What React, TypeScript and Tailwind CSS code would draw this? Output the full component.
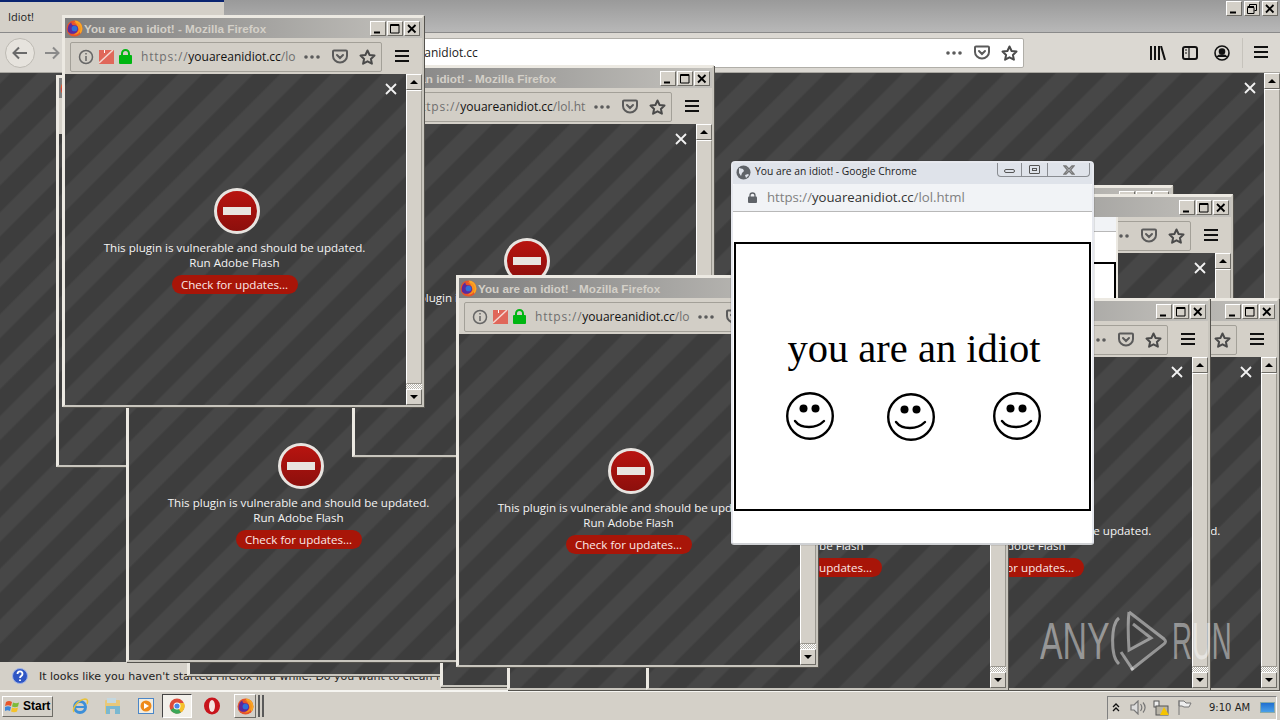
import React from "react";

const STRIPES =
  "bg-[repeating-linear-gradient(-45deg,#3d3d3d_0px,#3d3d3d_17px,#474747_19px,#474747_34px,#3d3d3d_36px)]";
const RAISED =
  "border border-t-[#ffffff] border-l-[#ffffff] border-r-[#6e6c66] border-b-[#6e6c66] bg-[#d4d0c8]";

function Pocket({ c = "#5b5b5b" }: { c?: string }) {
  return (
    <svg width="16" height="15" viewBox="0 0 16 15" fill="none" stroke={c} strokeWidth="2">
      <path d="M2 1.500h12a1 1 0 0 1 1 1V7a7 6.500 0 0 1-14 0V2.500a1 1 0 0 1 1-1z" />
      <path d="M5 6l3 3 3-3" strokeLinecap="round" />
    </svg>
  );
}
function Star() {
  return (
    <svg width="17" height="16" viewBox="0 0 17 16" fill="none" stroke="#4a4a4a" strokeWidth="2" strokeLinejoin="round">
      <path d="M8.500 1.500l2.100 4.500 4.900.6-3.600 3.300 1 4.800-4.400-2.400-4.400 2.400 1-4.800-3.600-3.300 4.900-.6z" />
    </svg>
  );
}
function Dots() {
  return (
    <svg width="18" height="4" viewBox="0 0 18 4" fill="#5b5b5b">
      <circle cx="3" cy="2" r="1.800" />
      <circle cx="9" cy="2" r="1.800" />
      <circle cx="15" cy="2" r="1.800" />
    </svg>
  );
}
function Burger() {
  return (
    <svg width="14" height="13" viewBox="0 0 14 13" fill="#111">
      <rect y="0" width="14" height="2" />
      <rect y="5" width="14" height="2" />
      <rect y="10" width="14" height="2" />
    </svg>
  );
}
function FirefoxLogo({ s = 17 }: { s?: number }) {
  return (
    <svg className="shrink-0" width={s} height={s} viewBox="0 0 16 16">
      <circle cx="8" cy="8" r="7.500" fill="#e8542a" />
      <path d="M8 .5a7.500 7.500 0 0 1 7.500 7.500c0 2-1 4-2 5-1-5-3-8-5.500-12.500z" fill="#f9a825" />
      <path d="M2 11c-1-3 0-7 3-9 0 2 1 3 3 3 3 0 4 3 3 5s-3 3-5 3-3-1-4-2z" fill="#5b2a9d" />
      <circle cx="8" cy="8" r="2.700" fill="#2f6fd8" />
      <path d="M7 2.500c3 .5 5 3 5 5.500s-2 5-5 5.500c4 1 7-2 7-5.500s-3-6.500-7-5.500z" fill="#f7941d" />
    </svg>
  );
}

function WinBtn({ kind }: { kind: "min" | "max" | "close" | "restore" }) {
  return (
    <div className={`flex h-[15px] w-[16px] items-center justify-center ${RAISED}`}>
      <svg width="10" height="10" viewBox="0 0 10 10" fill="none" stroke="#000">
        {kind === "min" && <rect x="1" y="7.500" width="6" height="2" fill="#000" stroke="none" />}
        {kind === "max" && <path d="M.5.500h8.500v8.500h-8.500zM.5 1.500h8.500" />}
        {kind === "restore" && <path d="M2.500 2V.5h7v6h-2M.5 3.500h6.500v6h-6.500zM.5 2.500h6.500" />}
        {kind === "close" && <path d="M1 1l7.500 7.500M8.500 1L1 8.500" strokeWidth="1.800" />}
      </svg>
    </div>
  );
}

function Scrollbar({ dither = true }: { dither?: boolean }) {
  return (
    <div className="flex w-[16px] shrink-0 flex-col bg-[#d4d0c8]">
      <div className={`flex h-[16px] items-center justify-center ${RAISED}`}>
        <div className="h-0 w-0 border-x-[4px] border-b-[4px] border-x-transparent border-b-black" />
      </div>
      <div className="flex-1 border border-t-white border-l-white border-r-[#9a978f] border-b-[#9a978f] bg-[#d4d0c8]" />
      {dither && <div className="h-[5px] bg-[repeating-conic-gradient(#ffffff_0_25%,#b8b5ad_0_50%)] bg-[length:2px_2px]" />}
      <div className={`flex h-[16px] items-center justify-center ${RAISED}`}>
        <div className="h-0 w-0 border-x-[4px] border-t-[4px] border-x-transparent border-t-black" />
      </div>
    </div>
  );
}

function CloseX({ pos }: { pos: string }) {
  return (
    <svg className={`absolute ${pos}`} width="12" height="12" viewBox="0 0 12 12" stroke="#f2f2f2" strokeWidth="1.800">
      <path d="M1 1l10 10M11 1L1 11" />
    </svg>
  );
}

function Plugin() {
  return (
    <div className="flex flex-col items-center pr-[2px] pt-[114px] font-['Open_Sans',sans-serif] text-[11.600px] leading-[15px] text-[#f4f4f4]">
      <div className="ml-[4px] flex h-[46px] w-[46px] items-center justify-center rounded-full border-[3px] border-[#e8e4e0] bg-gradient-to-b from-[#b81410] to-[#8c0f0c]">
        <div className="h-[8px] w-[28px] bg-[#e8e4e0]" />
      </div>
      <div className="mt-[6px] whitespace-nowrap">This plugin is vulnerable and should be updated.</div>
      <div className="whitespace-nowrap">Run Adobe Flash</div>
      <div className="mt-[5px] flex h-[19px] w-[126px] items-center justify-center rounded-full bg-[#a81508] text-[#fbe9e7]">
        Check for updates...
      </div>
    </div>
  );
}

function Firefox({ pos, short = false }: { pos: string; short?: boolean }) {
  return (
    <div className={`absolute flex h-[392px] w-[362px] flex-col border-2 border-t-[3px] border-l-[3px] border-[#ece9e2] border-r-[#c8c5bd] border-b-[#c8c5bd] bg-[#d4d0c8] shadow-[1px_1px_0_#55534e] ${pos}`}>
      <div className="flex h-[20px] shrink-0 items-center bg-gradient-to-r from-[#7e7e7e] to-[#c4c2bd] pl-[1px] pr-[2px] pt-[1px]">
        <FirefoxLogo />
        <span className="ml-[1px] whitespace-nowrap font-['Liberation_Sans',sans-serif] text-[11.700px] font-bold text-[#d4d0c8]">
          You are an idiot! - Mozilla Firefox
        </span>
        <div className="ml-auto flex gap-[1px]">
          <WinBtn kind="min" />
          <WinBtn kind="max" />
          <WinBtn kind="close" />
        </div>
      </div>
      <div className="flex h-[36px] shrink-0 items-center pl-[5px] pt-[1px]">
        <div className="flex h-[30px] w-[312px] items-center rounded-[2px] border border-[#a3a098] bg-[#d2cec6]">
          {short ? (
            <div className="w-[52px] shrink-0" />
          ) : (
            <div className="flex w-[70px] shrink-0 items-center gap-[5px] pl-[7px]">
              <svg width="16" height="16" viewBox="0 0 16 16" fill="none" stroke="#666" strokeWidth="1.500">
                <circle cx="8" cy="8" r="6.500" />
                <path d="M8 7v5M8 4v1.500" />
              </svg>
              <svg width="15" height="14" viewBox="0 0 15 14">
                <rect width="15" height="14" y="0" fill="#e0675a" />
                <path d="M0 13L14 0" stroke="#f4d8d2" strokeWidth="1.500" />
                <rect x="5" y="0" width="1" height="3" fill="#fff" />
              </svg>
              <svg width="13" height="15" viewBox="0 0 13 15" fill="#00b612">
                <path d="M3 7V4.500a3.500 3.500 0 0 1 7 0V7" fill="none" stroke="#00b612" strokeWidth="2" />
                <rect y="6" width="13" height="9" rx="1" />
              </svg>
            </div>
          )}
          <div className={`h-[20px] shrink-0 overflow-hidden whitespace-nowrap font-['Open_Sans',sans-serif] text-[12px] leading-[20px] text-[#6f6f6f] ${short ? "w-[173px]" : "w-[155px]"}`}>
            <span className="tracking-[0.8px]">https://</span>
            <span className="text-[#111]">youareanidiot.cc</span>/lol.html
          </div>
          <div className="ml-[7px] flex items-center">
            <Dots />
          </div>
          <div className="ml-[11px] flex">
            <Pocket />
          </div>
          <div className="ml-[11px] flex">
            <Star />
          </div>
        </div>
        <div className="ml-[13px] flex">
          <Burger />
        </div>
      </div>
      <div className="flex min-h-0 flex-1">
        <div className={`relative min-w-0 flex-1 overflow-hidden ${STRIPES}`}>
          <CloseX pos="left-[320px] top-[9px]" />
          <Plugin />
        </div>
        <Scrollbar />
      </div>
    </div>
  );
}

function Smiley({ cls }: { cls: string }) {
  return (
    <svg className={cls} width="48" height="48" viewBox="0 0 48 48" fill="none" stroke="#000" strokeWidth="2.400">
      <circle cx="24" cy="24" r="22.800" />
      <circle cx="17.500" cy="16.500" r="4" fill="#000" stroke="none" />
      <circle cx="29.500" cy="16.500" r="4" fill="#000" stroke="none" />
      <path d="M9 29c3 4 8 6 14 6s11-2 15-6" strokeWidth="2.400" strokeLinecap="round" />
    </svg>
  );
}

function Chrome() {
  return (
    <div className="absolute left-[731px] top-[161px] flex h-[384px] w-[363px] flex-col rounded-t-[4px] rounded-b-[3px] border-2 border-[#e6e8ee] border-b-[#cfd1d4] bg-white shadow-[0_0_1px_#222]">
      <div className="flex h-[21px] shrink-0 items-center bg-[#dfe3ea] pl-[3px]">
        <svg className="mb-[2px]" width="15" height="15" viewBox="0 0 15 15">
          <circle cx="7.500" cy="7.500" r="7" fill="#5f6368" />
          <path d="M3 3l4 1 1 2-2 2-1 3-2-3zM9 10l3-1 1 1-3 3z" fill="#dfe3ea" />
        </svg>
        <span className="mb-[3px] ml-[4px] whitespace-nowrap font-['Open_Sans',sans-serif] text-[10.300px] text-[#222]">
          You are an idiot! - Google Chrome
        </span>
        <div className="ml-auto mr-[2px] flex h-[14px] self-start rounded-b-[4px] border border-t-0 border-[#8a8d92]">
          <div className="flex w-[24px] items-center justify-center border-r border-[#8a8d92]">
            <div className="mt-[3px] h-[4px] w-[11px] rounded-[2px] border border-[#555]" />
          </div>
          <div className="flex w-[26px] items-center justify-center border-r border-[#8a8d92]">
            <div className="flex h-[9px] w-[11px] items-center justify-center rounded-[1px] border border-[#555]">
              <div className="h-[3px] w-[5px] border border-[#555]" />
            </div>
          </div>
          <div className="flex w-[41px] items-center justify-center">
            <svg width="12" height="10" viewBox="0 0 12 10" fill="none" stroke="#777" strokeWidth="1.300">
              <path d="M1 1h2l3 3 3-3h2L7.500 5 11 9H9L6 6 3 9H1l3.500-4z" />
            </svg>
          </div>
        </div>
      </div>
      <div className="flex h-[28px] shrink-0 items-center rounded-t-[2px] border-b border-[#b8b8b8] bg-[#f1f3f6] pl-[15px]">
        <svg width="9" height="11" viewBox="0 0 9 11" fill="#5f6368">
          <path d="M2 5V3.500a2.500 2.500 0 0 1 5 0V5" fill="none" stroke="#5f6368" strokeWidth="1.300" />
          <rect y="4.500" width="9" height="6.500" rx="1" />
        </svg>
        <span className="ml-[10px] whitespace-nowrap font-['Open_Sans',sans-serif] text-[13.200px] text-[#808080]">
          https://<span className="text-[#333]">youareanidiot.cc</span>/lol.html
        </span>
      </div>
      <div className="h-[30px] shrink-0" />
      <div className="relative mx-[1px] h-[269px] shrink-0 border-2 border-black">
        <div className="pl-[3px] pt-[82px] text-center font-['Liberation_Serif',serif] text-[40.500px] leading-[46px] text-black">
          you are an idiot
        </div>
        <Smiley cls="absolute left-[50px] top-[148px]" />
        <Smiley cls="absolute left-[151px] top-[149px]" />
        <Smiley cls="absolute left-[257px] top-[148px]" />
      </div>
    </div>
  );
}

function TaskIcon({ children }: { children: React.ReactNode }) {
  return <div className="flex w-[33px] shrink-0 items-center justify-center">{children}</div>;
}

function Watermark() {
  return (
    <div className="absolute left-[1040px] top-[609px] flex h-[64px] items-center font-['Liberation_Sans',sans-serif] text-[52px] leading-[64px] text-white/45">
      <span className="w-[67px] origin-left scale-x-[0.65] whitespace-nowrap">ANY</span>
      <svg width="60" height="62" viewBox="0 0 60 62" fill="none" stroke="#ffffff" strokeOpacity="0.45" strokeWidth="3">
        <path d="M12 8C4 14 3 46 12 54" />
        <path d="M22 2l35 27c2 2 2 3 0 5L24 60M22 2c-1 8-1 22 0 38l22-12L26 14" />
        <path d="M14 42l12 18" />
      </svg>
      <span className="ml-[5px] w-[60px] origin-left scale-x-[0.53] whitespace-nowrap">RUN</span>
    </div>
  );
}

export default function App() {
  return (
    <div className="relative flex h-[720px] w-[1280px] flex-col overflow-hidden bg-[#d4d0c8] font-['Open_Sans',sans-serif]">
      {/* main browser title */}
      <div className="flex h-[33px] shrink-0 border-b border-[#8a8a8a] bg-gradient-to-b from-[#9a9a9a] to-[#b8b8b8]">
        <div className="flex w-[224px] shrink-0 items-center border-t-2 border-[#0a2470] bg-[#d4d0c8] pl-[8px] text-[11px] text-[#222]">
          Idiot!
        </div>
        <div className="ml-auto mr-[2px] mt-[1px] flex gap-[2px]">
          <WinBtn kind="min" />
          <WinBtn kind="restore" />
          <WinBtn kind="close" />
        </div>
      </div>
      {/* main toolbar */}
      <div className="flex h-[40px] shrink-0 items-center border-b border-[#a8a6a0] bg-[#dbd8d2] pl-[5px]">
        <div className="flex h-[30px] w-[30px] shrink-0 items-center justify-center rounded-full border border-[#bdbab3] bg-[#e6e3dd]">
          <svg width="16" height="14" viewBox="0 0 16 14" fill="none" stroke="#6a6a6a" strokeWidth="2">
            <path d="M15 7H2M7 1.500L1.500 7 7 12.500" />
          </svg>
        </div>
        <svg className="ml-[9px]" width="16" height="14" viewBox="0 0 16 14" fill="none" stroke="#8a8a8a" strokeWidth="2">
          <path d="M1 7h13M9 1.500L14.500 7 9 12.500" />
        </svg>
        <div className="ml-[10px] flex h-[30px] w-[954px] shrink-0 items-center rounded-[2px] border border-[#b0aea8] bg-white pl-[267px]">
          <span className="mt-[1px] whitespace-nowrap text-[12px] text-[#222]">
            <span className="tracking-[0.8px] text-[#6f6f6f]">https://</span>youareanidiot.cc
          </span>
          <div className="ml-auto flex">
            <Dots />
          </div>
          <div className="ml-[11px] flex">
            <Pocket />
          </div>
          <div className="ml-[11px] mr-[5px] flex">
            <Star />
          </div>
        </div>
        <svg className="ml-[126px]" width="16" height="14" viewBox="0 0 16 14" fill="none" stroke="#111" strokeWidth="2">
          <path d="M1 0v14M5 0v14M9 0v14M11 0l4 14" />
        </svg>
        <svg className="ml-[16px]" width="16" height="14" viewBox="0 0 16 14" fill="none" stroke="#111" strokeWidth="2">
          <rect x="1" y="1" width="14" height="12" rx="2" />
          <path d="M7 1v12M3 4h2M3 7h2" strokeWidth="1.200" />
        </svg>
        <svg className="ml-[16px]" width="16" height="16" viewBox="0 0 16 16" fill="none" stroke="#111" strokeWidth="1.600">
          <circle cx="8" cy="8" r="7" />
          <circle cx="8" cy="6.500" r="2.500" fill="#111" />
          <path d="M3 12c2-2.500 8-2.500 10 0" fill="#111" />
        </svg>
        <div className="ml-[12px] h-[30px] border-l border-[#c6c3bc]" />
        <div className="ml-[11px] flex">
          <Burger />
        </div>
      </div>
      {/* main page */}
      <div className={`relative flex min-h-0 flex-1 ${STRIPES}`}>
        <div className="flex-1" />
        <CloseX pos="left-[1244px] top-[9px]" />
        <Scrollbar />
      </div>
      {/* notification bar */}
      <div className="flex h-[30px] shrink-0 items-center border-b-2 border-[#f6f5f1] pl-[12px]">
        <svg width="16" height="16" viewBox="0 0 16 16">
          <circle cx="8" cy="8" r="7.500" fill="#2f56c4" stroke="#9fb2e6" />
          <path d="M5.500 6c0-3.500 5-3.500 5 0 0 2-2.500 2-2.500 4M8 11.500v1.500" stroke="#fff" strokeWidth="1.800" fill="none" />
        </svg>
        <span className="ml-[11px] mt-[2px] whitespace-nowrap font-['DejaVu_Sans',sans-serif] text-[11px] text-[#222]">
          It looks like you haven't started Firefox in a while. Do you want to clean it up for a fresh experience?
        </span>
      </div>
      {/* taskbar */}
      <div className="flex h-[28px] shrink-0 items-center bg-[#d4d0c8] pl-[2px]">
        <div className={`flex h-[21px] w-[51px] shrink-0 items-center gap-[2px] pl-[2px] ${RAISED}`}>
          <svg width="16" height="14" viewBox="0 0 16 14">
            <path d="M1 3c2-1.500 4-1.500 6 0l-1 4C4 6 2 6 0 7z" fill="#e8562a" />
            <path d="M8 3.500c2 1 4 1 6 0l-1 4c-2 1-4 1-6 0z" fill="#7cbb3a" />
            <path d="M0 8c2-1 4-1 6 0l-1 4c-2-1-3-1-5 0z" fill="#3d86d8" />
            <path d="M7 8.500c2 1 4 1 6 0l-1 4c-2 1-4 1-6 0z" fill="#f5c22a" />
          </svg>
          <span className="font-['Liberation_Sans',sans-serif] text-[12px] font-bold text-black">Start</span>
        </div>
        <div className="ml-[10px] flex items-center">
          <TaskIcon>
            <svg width="18" height="18" viewBox="0 0 18 18" fill="none">
              <circle cx="9" cy="10" r="5.500" stroke="#3d8fd8" strokeWidth="3" />
              <path d="M4 10h10" stroke="#3d8fd8" strokeWidth="2" />
              <path d="M3 15C1 12 6 3 14 2c3 0 3 3 2 5" stroke="#e8c23a" strokeWidth="1.500" />
            </svg>
          </TaskIcon>
          <TaskIcon>
            <svg width="16" height="18" viewBox="0 0 16 18">
              <rect y="3" width="15" height="14" rx="1" fill="#e8c878" />
              <rect x="2" y="1" width="9" height="5" fill="#c4d8e0" />
              <rect x="1" y="9" width="14" height="8" fill="#7ab8d0" />
              <rect x="5" y="12" width="5" height="5" fill="#d4d0c8" />
            </svg>
          </TaskIcon>
          <TaskIcon>
            <svg width="16" height="16" viewBox="0 0 16 16">
              <rect x=".5" y=".5" width="15" height="15" fill="#f2ede0" stroke="#4a86c8" />
              <circle cx="8" cy="8" r="5.500" fill="#ee8a1a" />
              <path d="M6 5l5 3-5 3z" fill="#fff" />
            </svg>
          </TaskIcon>
          <div className="flex h-[24px] w-[30px] shrink-0 items-center justify-center border border-t-[#444] border-l-[#444] border-r-white border-b-white bg-[#f2f0ea]">
            <svg width="16" height="16" viewBox="0 0 16 16">
              <circle cx="8" cy="8" r="7.500" fill="#dd4b3a" />
              <path d="M8 8L1.500 12A7.500 7.500 0 0 0 12 14.500z" fill="#3aa757" />
              <path d="M8 8l4 6.500A7.500 7.500 0 0 0 15 5H8z" fill="#f5c22a" />
              <circle cx="8" cy="8" r="3.500" fill="#fff" />
              <circle cx="8" cy="8" r="2.600" fill="#4a86e8" />
            </svg>
          </div>
          <div className="ml-[5px] flex w-[30px] shrink-0 justify-center">
            <svg width="18" height="18" viewBox="0 0 18 18">
              <ellipse cx="9" cy="9" rx="8" ry="8.500" fill="#c8141c" />
              <ellipse cx="9" cy="9" rx="3" ry="6" fill="#f4e4e0" />
            </svg>
          </div>
          <div className={`relative ml-[7px] flex h-[24px] w-[22px] shrink-0 items-center justify-center ${RAISED}`}>
            <FirefoxLogo s={17} />
            <div className="absolute -right-[5px] top-0 h-full border-l-2 border-[#5a5a5a]" />
            <div className="absolute -right-[9px] top-0 h-full border-l-2 border-[#5a5a5a]" />
          </div>
        </div>
        <div className="ml-auto mr-[3px] mt-[3px] flex h-[24px] w-[170px] shrink-0 items-center border border-t-[#808080] border-l-[#808080] border-r-white border-b-white pl-[4px] pr-[1px]">
          <svg width="8" height="9" viewBox="0 0 8 9" fill="none" stroke="#111" strokeWidth="1.300">
            <path d="M1 4l3-3 3 3M1 8l3-3 3 3" />
          </svg>
          <svg className="ml-[10px]" width="16" height="15" viewBox="0 0 16 15" fill="none" stroke="#777" strokeWidth="1.200">
            <path d="M1 5h3l4-4v13l-4-4H1z" fill="#ddd" />
            <path d="M10.500 4c1.500 2 1.500 5 0 7M13 2.500c2.500 3 2.500 7 0 10" />
          </svg>
          <svg className="ml-[7px]" width="17" height="16" viewBox="0 0 17 16">
            <rect x="1" y="1" width="5" height="6" fill="#eee" stroke="#555" />
            <rect x="3" y="6" width="12" height="9" fill="#b8b4a8" stroke="#555" />
            <path d="M11 7l5 8h-9z" fill="#f5c400" />
          </svg>
          <svg className="ml-[7px]" width="16" height="15" viewBox="0 0 16 15" fill="#eee" stroke="#777">
            <path d="M2 0v15M2 1h5l2 2h5l-2 4H7L5 6H2z" />
          </svg>
          <span className="ml-[16px] whitespace-nowrap font-['DejaVu_Sans',sans-serif] text-[10px] text-[#222]">9:10 AM</span>
          <div className="ml-auto h-[11px] w-[15px] border border-[#8aa] bg-gradient-to-b from-[#1f6fd0] to-[#4aa0e8]" />
        </div>
      </div>

      {/* windows on the desktop, back to front */}
      <Firefox pos="left-[187px] top-[284px]" />
      <Firefox pos="left-[440px] top-[295px]" />
      <Firefox pos="left-[507px] top-[298px]" />
      <Firefox pos="left-[56px] top-[75px]" />
      <Firefox pos="left-[126px] top-[270px]" />
      <Firefox pos="left-[352px] top-[65px]" short />
      <Firefox pos="left-[811px] top-[185px]" />
      <Firefox pos="left-[871px] top-[194px]" />
      <Firefox pos="left-[917px] top-[298px]" />
      <Firefox pos="left-[848px] top-[298px]" />
      <Firefox pos="left-[646px] top-[298px]" />
      <Firefox pos="left-[62px] top-[15px]" />
      <Firefox pos="left-[456px] top-[275px]" />
      {/* second chrome popup peeking out */}
      <div className="absolute left-[1093px] top-[217px] flex h-[81px] w-[25px] flex-col border-r-2 border-[#ece9e2] bg-white">
        <div className="h-[15px] border-b border-[#b8b8b8] bg-[#f1f3f6]" />
        <div className="h-[30px]" />
        <div className="flex-1 border-t-2 border-r-2 border-black" />
      </div>
      <Chrome />
      <Watermark />
    </div>
  );
}
